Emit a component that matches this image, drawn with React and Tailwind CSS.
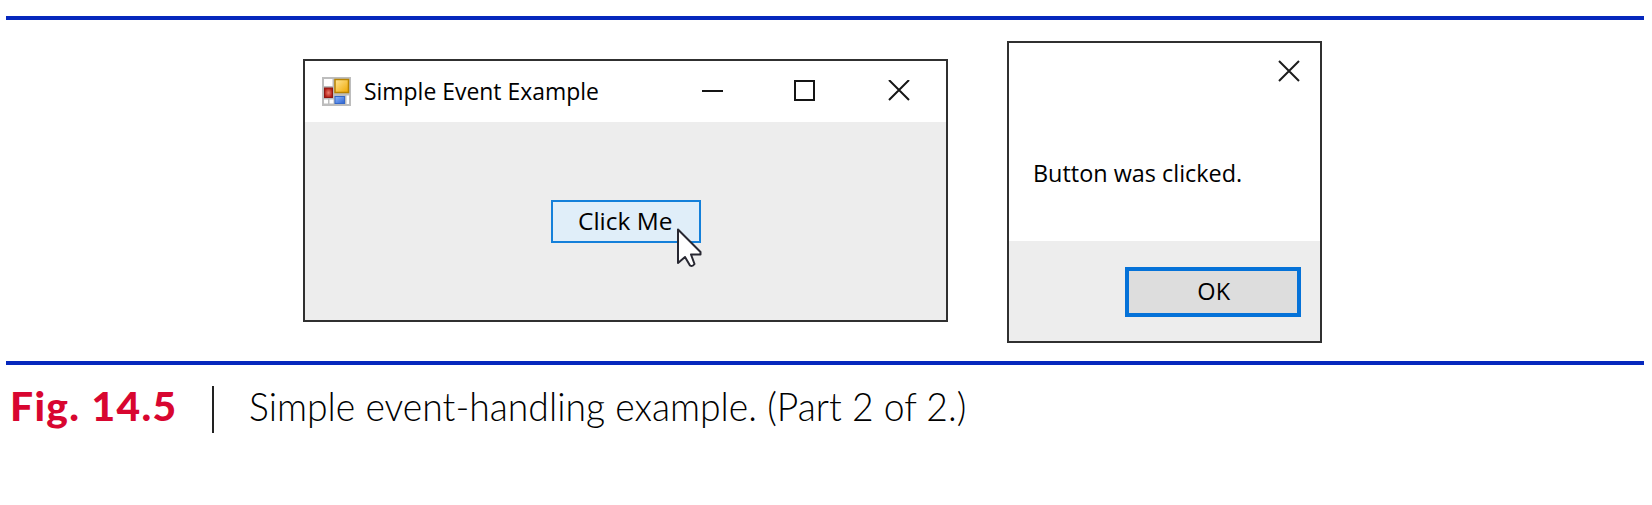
function FormIcon() {
  return (
    <svg className="block h-[29px] w-[29px]" viewBox="0 0 29 29">
      <defs>
        <linearGradient id="gold" x1="0" y1="0" x2="1" y2="1">
          <stop offset="0" stopColor="#ffe79a" />
          <stop offset="1" stopColor="#f0a800" />
        </linearGradient>
        <linearGradient id="sky" x1="0" y1="0" x2="1" y2="1">
          <stop offset="0" stopColor="#8db8ff" />
          <stop offset="1" stopColor="#2c62d0" />
        </linearGradient>
        <radialGradient id="brick">
          <stop offset="0" stopColor="#ec8070" />
          <stop offset="1" stopColor="#b41c14" />
        </radialGradient>
      </defs>
      <rect width="29" height="29" fill="#bdbdbd" />
      <rect x="2" y="2" width="8.5" height="7" fill="#fff" />
      <rect x="2" y="22.500" width="4" height="4" fill="#fff" />
      <rect x="7.500" y="22.500" width="4" height="4" fill="#fff" />
      <rect x="24.500" y="18.500" width="2.500" height="8.500" fill="#fff" />
      <rect x="2.500" y="11" width="8" height="9.500" fill="url(#brick)" stroke="#8e1712" />
      <rect x="13" y="2.500" width="13.500" height="13" fill="url(#gold)" stroke="#b88300" strokeWidth="1.500" />
      <rect x="13" y="19.500" width="9.500" height="7" fill="url(#sky)" stroke="#3568c8" />
    </svg>
  );
}

function CloseIcon() {
  return (
    <svg className="block h-[22px] w-[22px]" viewBox="0 0 22 22" fill="none" stroke="#1c1c1c" strokeWidth="2">
      <path d="M1 1 21 21M21 1 1 21" />
    </svg>
  );
}

function Cursor() {
  return (
    <svg className="absolute left-[123px] top-[25px] h-[42px] w-[28px]" viewBox="0 0 28 42">
      <path
        d="M2 2.500V36L9 30 14 38.500Q16.500 40 18.500 37L15 27.500H24.500V25Z"
        fill="#fff"
        stroke="#282832"
        strokeWidth="2"
        strokeLinejoin="round"
      />
    </svg>
  );
}

function Rule() {
  return <div className="mr-2 ml-1.5 h-1 bg-[#0628bd]" />;
}

export default function App() {
  return (
    <main className="h-[505px] w-[1652px] overflow-hidden bg-white pt-4 font-['Open_Sans',sans-serif] text-black">
      <Rule />
      <div className="flex h-[341px] items-start pl-[303px]">
        <section className="mt-[39px] flex h-[263px] w-[645px] flex-col border-2 border-[#303030] bg-[#ededed]">
          <header className="flex h-[61px] shrink-0 items-center bg-white pb-px pl-[17px]">
            <FormIcon />
            <h1 className="ml-[13px] w-[339px] origin-left scale-x-[0.955] text-[24px] leading-8 whitespace-nowrap">
              Simple Event Example
            </h1>
            <svg className="-ml-[1px] block h-[22px] w-[210px]" viewBox="0 0 210 22" fill="none" stroke="#151515" strokeWidth="2">
              <path d="M0 11H21" />
              <rect x="93" y="1" width="19" height="19" />
              <path d="M187 0 207 20M207 0 187 20" />
            </svg>
          </header>
          <div className="flex flex-1 pt-[78px] pl-[246px]">
            <button className="relative flex h-[43px] w-[150px] items-center border-2 border-[#1480da] bg-[#e0eef9] pb-0.5 pl-[25px] text-[24px] whitespace-nowrap">
              <span className="origin-left scale-x-[1.02]">Click Me</span>
              <Cursor />
            </button>
          </div>
        </section>
        <section className="mt-[21px] ml-[59px] flex h-[302px] w-[315px] flex-col border-2 border-[#303030] bg-white">
          <header className="flex h-[60px] justify-end pt-[17px] pr-[20px]">
            <CloseIcon />
          </header>
          <p className="flex h-[138px] shrink-0 items-start pt-[54px] pl-[24px] text-[24px] leading-8 whitespace-nowrap">
            <span className="origin-left scale-x-[0.975]">Button was clicked.</span>
          </p>
          <footer className="flex flex-1 justify-end bg-[#ededed] pt-[26px] pr-[19px]">
            <button className="flex h-[50px] w-[176px] items-center justify-center border-4 border-[#0572d8] bg-[#dddddd] pb-0.5 pl-0.5 text-[24px]">
              <span className="scale-x-[0.98]">OK</span>
            </button>
          </footer>
        </section>
      </div>
      <Rule />
      <div className="flex h-[80px] items-start pt-[13px] pl-[10px] font-['Lato',sans-serif] text-[40px] leading-[56px] whitespace-nowrap">
        <strong className="w-[202px] origin-left scale-x-[1.02] font-black tracking-[1.3px] text-[#d80630]">Fig. 14.5</strong>
        <i className="mt-[8px] block h-[47px] w-[2px] bg-[#222]" />
        <span className="ml-[35px] origin-left scale-x-[0.933] font-light">Simple event-handling example. (Part 2 of 2.)</span>
      </div>
    </main>
  );
}
